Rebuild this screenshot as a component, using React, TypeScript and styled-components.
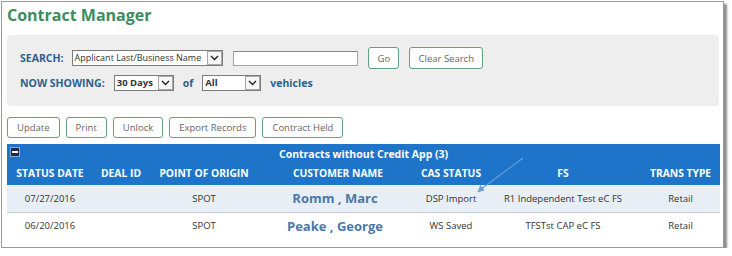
import React from 'react';
import styled, { createGlobalStyle } from 'styled-components';

const GlobalStyle = createGlobalStyle`
  html, body {
    margin: 0;
    padding: 0;
    background: #ffffff;
    font-family: "Open Sans", "Liberation Sans", Arial, sans-serif;
  }
`;

const Frame = styled.div`
  box-sizing: border-box;
  width: 723px;
  height: 247px;
  margin: 1px 0 0 1px;
  border: 1px solid #9a9a9a;
  box-shadow: 3px 3px 2px rgba(0, 0, 0, 0.45);
  background: #ffffff;
  padding: 3px 3px 0 5px;
  display: flex;
  flex-direction: column;
`;

const Title = styled.h1`
  margin: 0;
  font-size: 16px;
  line-height: 20px;
  font-weight: 700;
  color: #3c8c5e;
`;

const SearchPanel = styled.div`
  box-sizing: border-box;
  width: 712px;
  height: 71px;
  margin-top: 10px;
  padding: 12px 13px 0;
  background: #eeeeee;
  border-radius: 4px;
  display: flex;
  flex-direction: column;
  gap: 6px;
`;

const PanelRow = styled.div<{ $h: number }>`
  display: flex;
  align-items: center;
  height: ${(p) => p.$h}px;
`;

const Label = styled.span<{ $gap?: number }>`
  font-size: 10.5px;
  font-weight: 700;
  color: #2d5f8e;
  margin-right: ${(p) => p.$gap ?? 8}px;
  white-space: nowrap;
`;

const SelectBox = styled.div<{ $w: number; $bold?: boolean }>`
  box-sizing: border-box;
  width: ${(p) => p.$w}px;
  height: 16px;
  border: 1px solid #7c7c7c;
  background: #ffffff;
  display: flex;
  align-items: stretch;
  margin-right: ${(p) => (p.$bold ? 9 : 10)}px;
  font-size: ${(p) => (p.$bold ? 9.5 : 9)}px;
  font-weight: ${(p) => (p.$bold ? 700 : 400)};
  color: #333333;
`;

const SelectText = styled.span`
  flex: 1;
  padding-left: 2px;
  line-height: 14px;
  white-space: nowrap;
  overflow: hidden;
`;

const ArrowBox = styled.span`
  box-sizing: border-box;
  width: 15px;
  border: 1px solid #a8a8a8;
  background: #f6f6f6;
  display: flex;
  align-items: center;
  justify-content: center;
`;

const TextInput = styled.div`
  box-sizing: border-box;
  width: 125px;
  height: 15px;
  border: 1px solid #a4a4a4;
  border-top-color: #8a8a8a;
  background: #ffffff;
  margin-right: 10px;
`;

const OutlineButton = styled.button<{ $w?: number }>`
  box-sizing: border-box;
  height: ${(p) => (p.$w ? 22 : 21)}px;
  ${(p) => (p.$w ? `width: ${p.$w}px;` : '')}
  padding: 0 9px;
  border: 1px solid #5ea57c;
  border-radius: 3px;
  background: #ffffff;
  font-family: "Open Sans", "Liberation Sans", Arial, sans-serif;
  font-size: 9.5px;
  color: #666666;
  white-space: nowrap;
  margin-right: 10px;
`;

const ActionBar = styled.div`
  display: flex;
  gap: 6px;
  margin-top: 11px;

  & > button {
    margin-right: 0;
  }
`;

const TableWrap = styled.div`
  position: relative;
  width: 713px;
  margin-top: 6px;
`;

const Grid = styled.table`
  width: 713px;
  border-collapse: collapse;
  table-layout: fixed;
`;

const CaptionRow = styled.tr`
  height: 20px;
  background: #1d74c8;
`;

const CaptionCell = styled.th`
  position: relative;
  padding: 0;
  font-size: 10.5px;
  font-weight: 700;
  color: #ffffff;
  text-align: center;
`;

const Collapse = styled.span`
  position: absolute;
  left: 3px;
  top: 3px;
  box-sizing: border-box;
  width: 10px;
  height: 10px;
  background: #1b2d48;
  border: 1px solid #8aa6c8;
  display: flex;
  align-items: center;
  justify-content: center;

  &::after {
    content: '';
    width: 6px;
    height: 1.5px;
    background: #ffffff;
  }
`;

const HeadRow = styled.tr`
  height: 21px;
  background: #1d74c8;
`;

const HeadCell = styled.th`
  padding: 0;
  font-size: 10.3px;
  font-weight: 700;
  color: #ffffff;
  text-align: center;
  white-space: nowrap;
  vertical-align: top;
  line-height: 18px;
`;

const BodyRow = styled.tr<{ $alt?: boolean }>`
  height: 27px;
  background: ${(p) => (p.$alt ? '#e7eef6' : '#ffffff')};
  border-bottom: ${(p) => (p.$alt ? '1px solid #c9cdd3' : 'none')};
`;

const Cell = styled.td`
  padding: 0;
  font-size: 9.5px;
  color: #333333;
  text-align: center;
  white-space: nowrap;
`;

const NameCell = styled(Cell)`
  font-size: 13px;
  font-weight: 700;
  color: #4a78a9;
  padding-right: 6px;
`;

const Annotation = styled.svg`
  position: absolute;
  left: 0;
  top: 0;
  pointer-events: none;
`;

const Chevron = () => (
  <svg width="9" height="6" viewBox="0 0 9 6">
    <path d="M1 1 L4.5 4.5 L8 1" fill="none" stroke="#222" strokeWidth="1.4" />
  </svg>
);

const Select = ({ w, text, bold }: { w: number; text: string; bold?: boolean }) => (
  <SelectBox $w={w} $bold={bold}>
    <SelectText>{text}</SelectText>
    <ArrowBox>
      <Chevron />
    </ArrowBox>
  </SelectBox>
);

const columns = [
  { title: 'STATUS DATE', width: 86 },
  { title: 'DEAL ID', width: 56 },
  { title: 'POINT OF ORIGIN', width: 110 },
  { title: 'CUSTOMER NAME', width: 158 },
  { title: 'CAS STATUS', width: 68 },
  { title: 'FS', width: 156 },
  { title: 'TRANS TYPE', width: 79 },
];

const rows = [
  { date: '07/27/2016', deal: '', origin: 'SPOT', name: 'Romm , Marc', cas: 'DSP Import', fs: 'R1 Independent Test eC FS', type: 'Retail' },
  { date: '06/20/2016', deal: '', origin: 'SPOT', name: 'Peake , George', cas: 'WS Saved', fs: 'TFSTst CAP eC FS', type: 'Retail' },
];

export default function App() {
  return (
    <>
      <GlobalStyle />
      <Frame>
        <Title>Contract Manager</Title>

        <SearchPanel>
          <PanelRow $h={22}>
            <Label>SEARCH:</Label>
            <Select w={151} text="Applicant Last/Business Name" />
            <TextInput />
            <OutlineButton $w={31}>Go</OutlineButton>
            <OutlineButton $w={74}>Clear Search</OutlineButton>
          </PanelRow>
          <PanelRow $h={16}>
            <Label $gap={9}>NOW SHOWING:</Label>
            <Select w={60} text="30 Days" bold />
            <Label $gap={9}>of</Label>
            <Select w={59} text="All" bold />
            <Label>vehicles</Label>
          </PanelRow>
        </SearchPanel>

        <ActionBar>
          <OutlineButton>Update</OutlineButton>
          <OutlineButton>Print</OutlineButton>
          <OutlineButton>Unlock</OutlineButton>
          <OutlineButton>Export Records</OutlineButton>
          <OutlineButton>Contract Held</OutlineButton>
        </ActionBar>

        <TableWrap>
          <Grid>
            <colgroup>
              {columns.map((c) => (
                <col key={c.title} style={{ width: c.width }} />
              ))}
            </colgroup>
            <thead>
              <CaptionRow>
                <CaptionCell colSpan={7}>
                  <Collapse />
                  Contracts without Credit App (3)
                </CaptionCell>
              </CaptionRow>
              <HeadRow>
                {columns.map((c) => (
                  <HeadCell key={c.title}>{c.title}</HeadCell>
                ))}
              </HeadRow>
            </thead>
            <tbody>
              {rows.map((r, i) => (
                <BodyRow key={r.date} $alt={i === 0}>
                  <Cell>{r.date}</Cell>
                  <Cell>{r.deal}</Cell>
                  <Cell>{r.origin}</Cell>
                  <NameCell>{r.name}</NameCell>
                  <Cell>{r.cas}</Cell>
                  <Cell>{r.fs}</Cell>
                  <Cell>{r.type}</Cell>
                </BodyRow>
              ))}
            </tbody>
          </Grid>
          <Annotation width="713" height="96" viewBox="0 0 713 96">
            <line x1="516" y1="14" x2="473" y2="46" stroke="#6d9fd6" strokeWidth="1.1" />
            <path d="M471 48 L473.5 41.5 L477 46 Z" fill="#6d9fd6" stroke="#6d9fd6" strokeWidth="0.8" />
          </Annotation>
        </TableWrap>
      </Frame>
    </>
  );
}
